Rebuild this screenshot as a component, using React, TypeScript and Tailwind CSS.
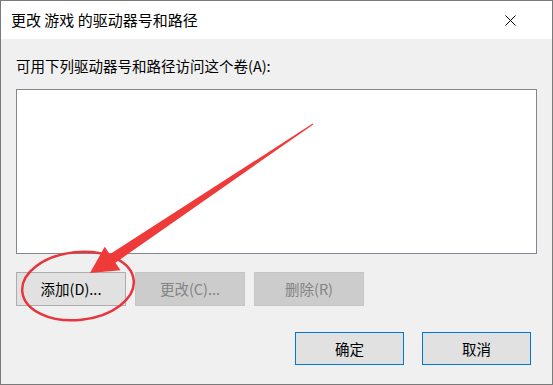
const font = { fontFamily: '"Noto Sans CJK SC", "Noto Sans", sans-serif' };

const App = () => {
  return (
    <div
      className="relative flex flex-col w-[553px] h-[385px] border border-[#7a7a7a] bg-[#f0f0f0] text-black overflow-hidden"
      style={font}
    >
      {/* 标题栏 */}
      <div className="flex items-center justify-between h-[38px] bg-white pl-[10px] pr-[36px]">
        <span className="text-[15px] leading-[20px]">更改 游戏 的驱动器号和路径</span>
        <svg width="11" height="11" viewBox="0 0 11 11" className="text-black">
          <path d="M0.5 0.5 L10.5 10.5 M10.5 0.5 L0.5 10.5" stroke="currentColor" strokeWidth="1" />
        </svg>
      </div>
      {/* 内容 */}
      <div className="flex flex-col px-[15px] pr-[21px] pt-[17px]">
        <span className="text-[14.5px] leading-[20px] h-[20px]">可用下列驱动器号和路径访问这个卷(A):</span>
        <div className="mt-[13px] w-[521px] h-[165px] border border-[#82878f] bg-white" />
        {/* 按钮 */}
        <div className="flex gap-[9px] mt-[18px]">
          <button className="w-[110px] h-[34px] border border-[#adadad] bg-[#e1e1e1] text-[14.5px]">
            添加(D)...
          </button>
          <button className="w-[110px] h-[34px] border border-[#c6c6c6] bg-[#cccccc] text-[14.5px] text-[#838383]">
            更改(C)...
          </button>
          <button className="w-[110px] h-[34px] border border-[#c6c6c6] bg-[#cccccc] text-[14.5px] text-[#838383]">
            删除(R)
          </button>
        </div>
        <div className="flex justify-end gap-[18px] mt-[26px]">
          <button className="w-[109px] h-[33px] border border-[#0078d7] bg-[#e1e1e1] text-[14.5px]">
            确定
          </button>
          <button className="w-[109px] h-[33px] border border-[#0078d7] bg-[#e1e1e1] text-[14.5px]">
            取消
          </button>
        </div>
      </div>
      {/* 红色标注 */}
      <svg className="absolute left-0 top-0 pointer-events-none" width="553" height="385" viewBox="0 0 553 385">
        <ellipse
          cx="77"
          cy="285"
          rx="56"
          ry="34"
          transform="rotate(-6 77 285)"
          fill="none"
          stroke="#e8343b"
          strokeWidth="2.5"
        />
        <polygon
          points="312.3,123.4 114.4,261.7 119.5,269.2 89,272 103.7,245.8 108.8,253.3 311.7,122.6"
          fill="#ef3a3a"
        />
      </svg>
    </div>
  );
};

export default App;
